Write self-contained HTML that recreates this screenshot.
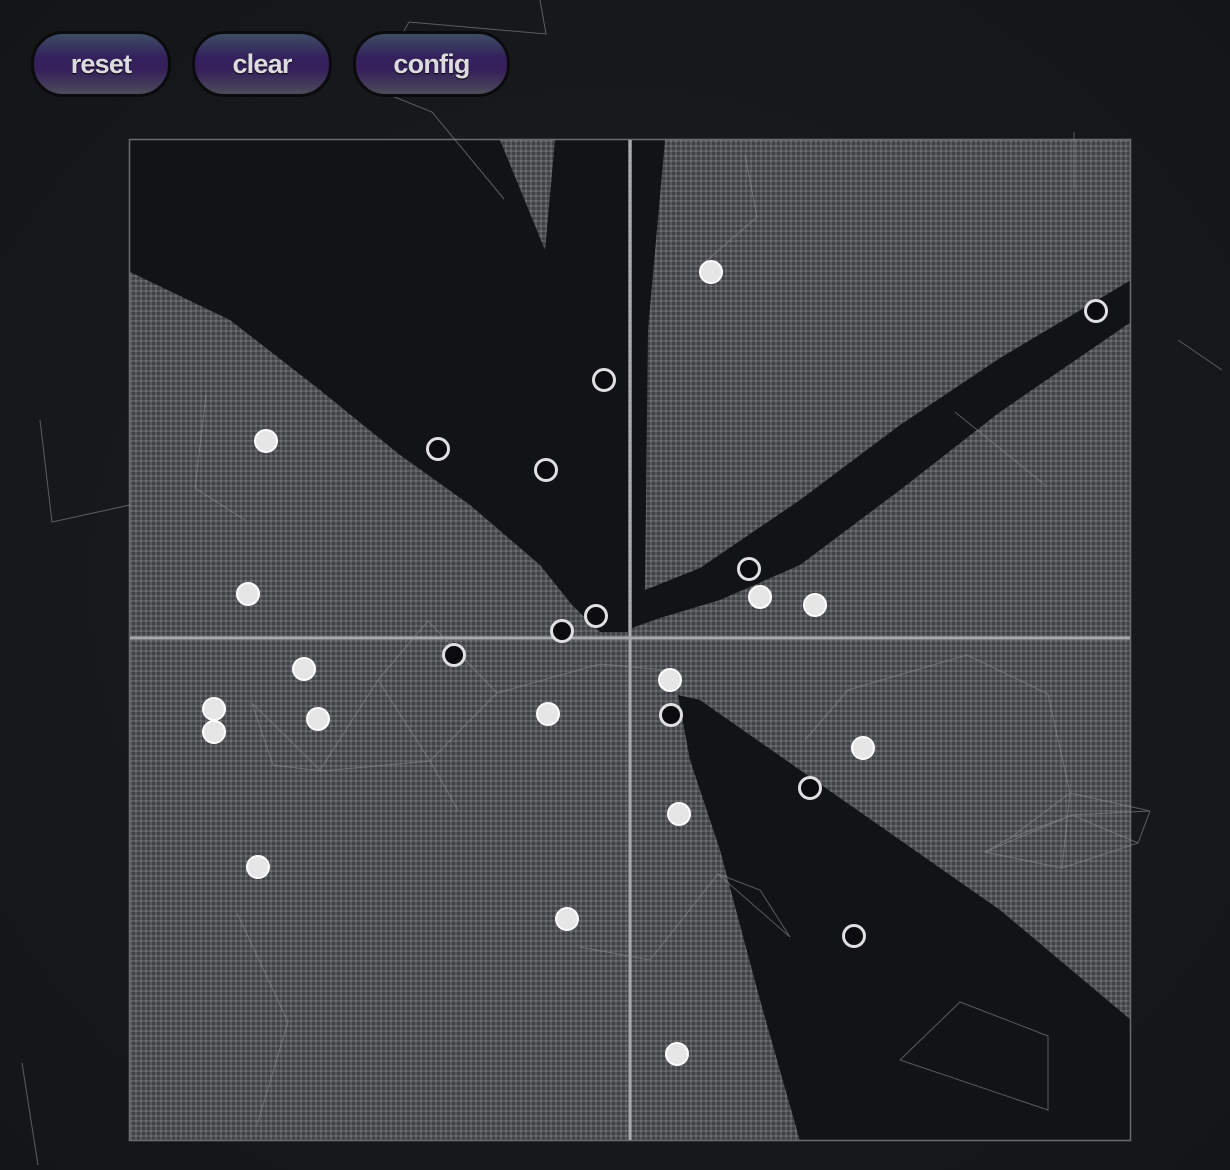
<!DOCTYPE html>
<html><head><meta charset="utf-8"><style>
html,body{margin:0;padding:0;width:1230px;height:1170px;overflow:hidden;background:#17191c;font-family:"Liberation Sans",sans-serif}
.btn{position:absolute;top:31px;height:60px;border-radius:32px;border:3px solid #0b0b0e;
background:linear-gradient(#3d4d63 0%,#33205c 40%,#35205a 60%,#4c4c5a 100%);color:#dcdce0;font-weight:bold;font-size:27px;
line-height:60px;text-align:center;letter-spacing:-0.8px;text-shadow:0 1px 1px #000}
</style></head><body>
<svg width="1230" height="1170" style="position:absolute;left:0;top:0">
<defs>
<pattern id="g" width="5" height="5" patternUnits="userSpaceOnUse">
<rect width="5" height="5" fill="#404246"/>
<rect width="5" height="2" fill="#56585c"/>
<rect width="2" height="5" fill="#56585c"/>
<rect width="2" height="2" fill="#6c6e72"/>
</pattern>
<radialGradient id="bg" cx="50%" cy="50%" r="70%"><stop offset="0" stop-color="#1c1f22"/><stop offset="1" stop-color="#131518"/></radialGradient>
</defs>
<rect width="1230" height="1170" fill="url(#bg)"/>
<rect x="129" y="139" width="1002" height="1002" fill="url(#g)"/>
<g fill="#121317">
<polygon points="130,140 500,140 545,250 555,140 628,140 628,632 600,632 572,605 540,565 470,505 400,455 320,390 230,320 130,272"/>
<polygon points="632,140 665,140 648,330 645,590 700,568 800,500 900,425 1000,358 1131,280 1131,322 1000,412 900,490 800,565 720,600 660,618 632,628"/>
<polygon points="678,695 700,700 800,770 900,840 1000,910 1131,1020 1131,1141 800,1141 760,1000 720,850 690,760"/>
</g>
<rect x="129.5" y="139.5" width="1001" height="1001" fill="none" stroke="#6a6c70" stroke-width="1.5"/>
<line x1="630" y1="140" x2="630" y2="1140" stroke="#a8a9ab" stroke-width="3"/>
<line x1="130" y1="638" x2="1130" y2="638" stroke="#a8a9ab" stroke-width="3"/>
<g stroke="#8a8c90" stroke-width="1" fill="none" opacity="0.6">
<polyline points="409,22 372,88 432,112 504,199"/><polyline points="409,22 546,34 540,0"/>
<polyline points="745,155 757,217 705,262"/>
<polyline points="1074,132 1074,190"/>
<polyline points="1178,340 1222,370"/>
<polyline points="40,420 52,522 130,505"/>
<polyline points="206,395 195,488 245,520"/>
<polyline points="955,412 1045,485"/>
<polyline points="252,703 273,765 322,771 430,761 458,810"/><polyline points="252,703 320,770 378,680 428,621 497,693 600,664 665,670"/>
<polyline points="378,680 430,761 497,693"/>
<polyline points="805,740 848,690 967,655 1048,694 1070,793"/>
<polyline points="1070,793 1010,838 985,852 1062,868 1138,843 1150,811 1070,793 1062,868"/><polyline points="1010,838 1072,815 1138,843"/><polyline points="985,852 1072,815 1150,811"/>
<polyline points="718,874 760,890 790,937 718,874 650,960 580,947"/>
<polyline points="900,1060 960,1002 1048,1036 1048,1110 900,1060"/>
<polyline points="237,913 288,1022 257,1125"/>
<polyline points="22,1063 38,1165"/>
</g>
<g fill="#e6e6e6" stroke="#fff" stroke-width="2">
<circle cx="711" cy="272" r="11"/><circle cx="266" cy="441" r="11"/><circle cx="248" cy="594" r="11"/><circle cx="760" cy="597" r="11"/><circle cx="815" cy="605" r="11"/><circle cx="304" cy="669" r="11"/><circle cx="670" cy="680" r="11"/><circle cx="214" cy="709" r="11"/><circle cx="214" cy="732" r="11"/><circle cx="318" cy="719" r="11"/><circle cx="548" cy="714" r="11"/><circle cx="863" cy="748" r="11"/><circle cx="679" cy="814" r="11"/><circle cx="258" cy="867" r="11"/><circle cx="567" cy="919" r="11"/><circle cx="677" cy="1054" r="11"/>
</g>
<g fill="#0c0c0e" stroke="#e0e0e0" stroke-width="3">
<circle cx="1096" cy="311" r="10.5"/><circle cx="604" cy="380" r="10.5"/><circle cx="438" cy="449" r="10.5"/><circle cx="546" cy="470" r="10.5"/><circle cx="749" cy="569" r="10.5"/><circle cx="596" cy="616" r="10.5"/><circle cx="562" cy="631" r="10.5"/><circle cx="454" cy="655" r="10.5"/><circle cx="671" cy="715" r="10.5"/><circle cx="810" cy="788" r="10.5"/><circle cx="854" cy="936" r="10.5"/>
</g>
</svg>
<div class="btn" style="left:31px;width:134px">reset</div>
<div class="btn" style="left:192px;width:134px">clear</div>
<div class="btn" style="left:353px;width:151px">config</div>
</body></html>
